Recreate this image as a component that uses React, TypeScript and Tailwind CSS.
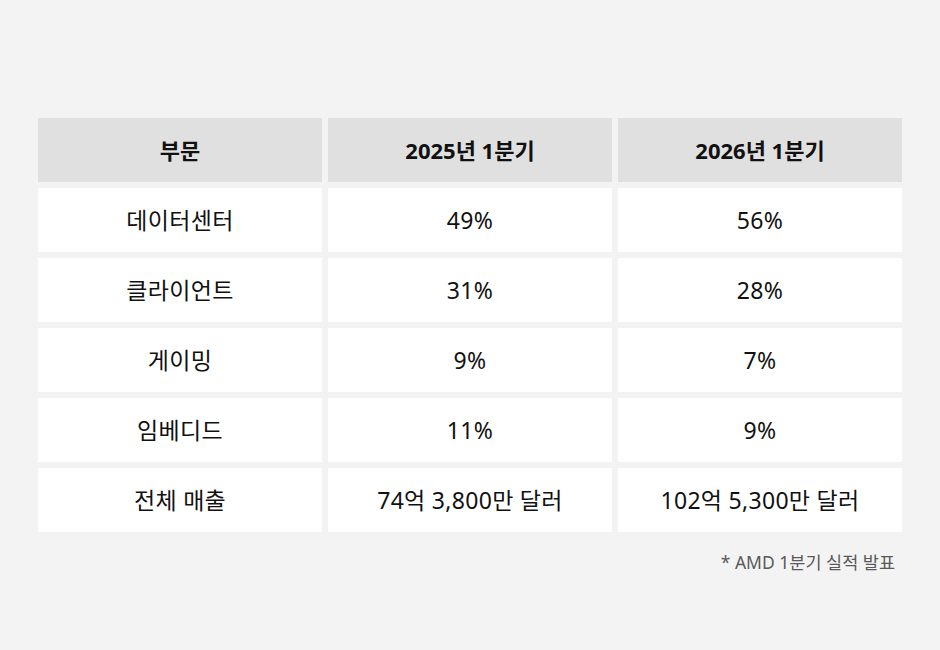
import React from "react";

const rows: [string, string, string][] = [
  ["데이터센터", "49%", "56%"],
  ["클라이언트", "31%", "28%"],
  ["게이밍", "9%", "7%"],
  ["임베디드", "11%", "9%"],
  ["전체 매출", "74억 3,800만 달러", "102억 5,300만 달러"],
];

export default function App() {
  return (
    <div
      className="w-[940px] h-[650px] bg-[#f3f3f3] pt-[118px] px-[38px]"
      style={{ fontFamily: '"Noto Sans", "Noto Sans CJK KR", sans-serif' }}
    >
      <div className="grid grid-cols-3 gap-[6px]">
        {["부문", "2025년 1분기", "2026년 1분기"].map((h) => (
          <div
            key={h}
            className="h-[64px] bg-[#e0e0e0] flex items-center justify-center text-[22px] font-bold text-[#111]"
          >
            {h}
          </div>
        ))}
        {rows.map((r) =>
          r.map((c, i) => (
            <div
              key={r[0] + i}
              className="h-[64px] bg-white flex items-center justify-center text-[23px] tracking-[0.3px] text-[#111]"
            >
              {c}
            </div>
          ))
        )}
      </div>
      <div className="flex justify-end pr-[7px] mt-[17px] text-[17.5px] text-[#5a5a5a] leading-[26px]">
        * AMD 1분기 실적 발표
      </div>
    </div>
  );
}
